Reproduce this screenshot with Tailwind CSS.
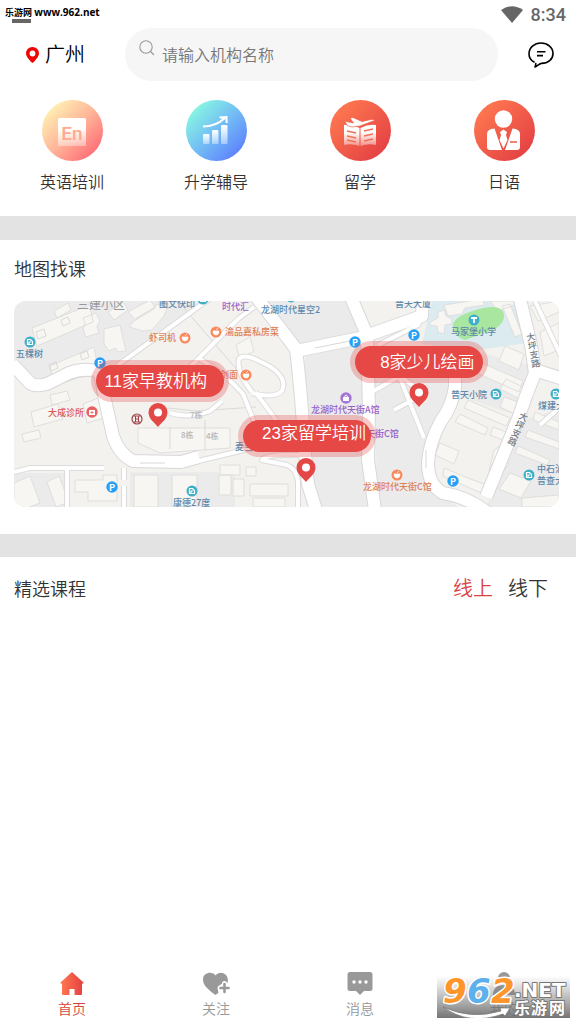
<!DOCTYPE html>
<html lang="zh-CN">
<head>
<meta charset="UTF-8">
<meta name="viewport" content="width=device-width,initial-scale=1">
<title>首页</title>
<script src="https://cdn.jsdelivr.net/npm/@tailwindcss/browser@4"></script>
</head>
<body class="bg-white font-['Noto_Sans_CJK_SC',sans-serif] font-[350] text-[#333]">
<div class="relative flex min-h-screen flex-col">

  <!-- status bar -->
  <div class="flex h-7 items-start justify-between pl-[5px] pr-[10px]">
    <div>
      <p class="mt-[6px] font-['Open_Sans','Noto_Sans_CJK_SC',sans-serif] text-[9px] leading-[13px] font-bold text-black">乐游网 <span class="text-[10px]">www.962.net</span></p>
      <div class="ml-[7px] h-1 w-[19px] bg-[#666]"></div>
    </div>
    <div class="flex items-center gap-2 pt-[5px] text-[#666]">
      <svg class="h-[18px] w-[22px]" viewBox="0 0 22 18" fill="currentColor"><path d="M0 4Q11-3.500 22 4L11 17Z"/></svg>
      <span class="font-[Roboto,sans-serif] text-[18px] leading-5 font-medium">8:34</span>
    </div>
  </div>

  <!-- header -->
  <header class="flex items-center pr-[22px] pl-[26px]">
    <button class="flex w-[99px] items-center gap-[6px] text-[20px] leading-6 text-black">
      <svg class="h-4 w-[13px]" viewBox="0 0 13 16"><path d="M6.500 0A6.400 6.400 0 0 0 0 6.400C0 10.500 6.500 16 6.500 16S13 10.500 13 6.400A6.400 6.400 0 0 0 6.500 0Z" fill="#f00505"/><circle cx="6.500" cy="6.500" r="2.900" fill="#fff"/></svg>
      <span class="pb-[2px]">广州</span>
    </button>
    <label class="flex h-[53px] flex-1 items-center gap-[7px] rounded-full bg-[#f6f6f6] px-[14px]">
      <svg class="mb-[14px] h-4 w-4 shrink-0" viewBox="0 0 16 16" fill="none" stroke="#999" stroke-width="1.100"><circle cx="7" cy="7" r="6.200"/><path d="m11.500 11.500 3.500 3.500"/></svg>
      <input type="text" aria-label="搜索" placeholder="请输入机构名称" class="min-w-0 flex-1 bg-transparent pb-[2px] text-base outline-none placeholder:text-[#777]">
    </label>
    <button class="ml-[30px]" aria-label="消息">
      <svg class="h-[26px] w-[26px]" viewBox="0 0 26 26" fill="none" stroke="#000" stroke-width="1.600" stroke-linecap="round" stroke-linejoin="round"><path d="M6 20C3 18.300 1 15.400 1 11.700 1 5.800 6.200 1 13 1s12 4.600 12 10.400-5 10-11.500 10C11.500 21.500 9.500 24 7 25c.6-1.300.8-2.200.8-3.400"/><path d="M9 9.800h8.500M9 13.600h6" stroke-linecap="butt"/></svg>
    </button>
  </header>

  <!-- categories -->
  <nav class="grid grid-cols-4 pt-[19px] pb-[23px]">
    <a href="#" class="flex flex-col items-center gap-2">
      <svg class="h-[61px] w-[61px]" viewBox="0 0 61 61">
        <defs>
          <linearGradient id="c1" x1=".1" y1=".1" x2=".9" y2=".9"><stop stop-color="#fff4b5"/><stop offset=".5" stop-color="#ffb699"/><stop offset="1" stop-color="#fe6975"/></linearGradient>
          <linearGradient id="fade" x1="0" y1="0" x2="0" y2="1"><stop offset=".35" stop-color="#fff"/><stop offset="1" stop-color="#fff" stop-opacity=".35"/></linearGradient>
        </defs>
        <circle cx="30.500" cy="30.500" r="30.500" fill="url(#c1)"/>
        <rect x="16" y="18" width="28" height="28" rx="1.500" fill="url(#fade)"/>
        <text x="30" y="39.500" text-anchor="middle" font-family="Roboto, sans-serif" font-size="19" font-weight="500" fill="#ffa98f">En</text>
      </svg>
      <span class="text-base leading-6">英语培训</span>
    </a>
    <a href="#" class="flex flex-col items-center gap-2">
      <svg class="h-[61px] w-[61px]" viewBox="0 0 61 61">
        <defs>
          <linearGradient id="c2" x1=".1" y1=".1" x2=".9" y2=".9"><stop stop-color="#89fbe0"/><stop offset=".5" stop-color="#73bdf5"/><stop offset="1" stop-color="#5c7efc"/></linearGradient>
          <linearGradient id="bar" x1="0" y1="0" x2="0" y2="1"><stop stop-color="#fff"/><stop offset="1" stop-color="#fff" stop-opacity=".4"/></linearGradient>
        </defs>
        <circle cx="30.500" cy="30.500" r="30.500" fill="url(#c2)"/>
        <g fill="url(#bar)"><rect x="17" y="34" width="6.500" height="10" rx="1"/><rect x="26" y="30" width="6.500" height="14" rx="1"/><rect x="35" y="25" width="6.500" height="19" rx="1"/></g>
        <path d="M17 26.500c9 0 16-3 22-8.500M33.500 17.500 40.500 17l.2 6" fill="none" stroke="#fff" stroke-width="2"/>
      </svg>
      <span class="text-base leading-6">升学辅导</span>
    </a>
    <a href="#" class="flex flex-col items-center gap-2">
      <svg class="h-[61px] w-[61px]" viewBox="0 0 61 61">
        <defs><linearGradient id="c3" x1=".1" y1=".1" x2=".9" y2=".9"><stop stop-color="#ff7950"/><stop offset="1" stop-color="#e34043"/></linearGradient></defs>
        <circle cx="30.500" cy="30.500" r="30.500" fill="url(#c3)"/>
        <path d="M14 25q8-1 15.500 3v18Q22 43 14 45ZM46 25q-8-1-15.500 3v18Q38 43 46 45Z" fill="url(#fade)"/>
        <path d="m17 31 9 2m-9 3 9 2m-9 2 9 2M43 29l-9 2m9 3-9 2m9 3-9 2" stroke="#f17158" stroke-width="1.500"/>
        <path d="m15 21 3.500 1 5 1L20 18l3-.5 9 4 9-2q3-.5 3.500 1L30 26l-8 1-5-1.500Z" fill="#fff" stroke="#ee6049" stroke-width=".7"/>
      </svg>
      <span class="text-base leading-6">留学</span>
    </a>
    <a href="#" class="flex flex-col items-center gap-2">
      <svg class="h-[61px] w-[61px]" viewBox="0 0 61 61">
        <circle cx="30.500" cy="30.500" r="30.500" fill="url(#c3)"/>
        <circle cx="29.500" cy="19" r="8.700" fill="#fff"/>
        <path d="M20.500 28.500 28 50H16q-3 0-3-3V34q0-5 7.500-5.500ZM38.500 28.500 31 50h12q3 0 3-3V34q0-5-7.500-5.500ZM29.500 29.500 33 32l-1 3 1.500 5-4 8.500-4-8.500 1.500-5-1-3Z" fill="#fff"/>
        <path d="M36 42h7" stroke="#ee7864" stroke-width="1.800"/>
      </svg>
      <span class="text-base leading-6">日语</span>
    </a>
  </nav>

  <div class="h-6 bg-[#e3e3e3]"></div>

  <!-- map -->
  <section class="pr-[17px] pb-[27px] pl-[14px]">
    <h2 class="pt-[15px] pb-[19px] text-[18px] leading-[27px]">地图找课</h2>
    <div class="relative overflow-hidden rounded-xl">
      <svg class="block w-full" viewBox="14 301 545 206">
        <defs>
          <g id="roads" fill="none" stroke-linejoin="round">
            <path d="M12 364 30 383q5 4 17 1l22-11q16-6 31-1l5 28 8 36q6 18 20 25l48 1 18-5"/>
            <path d="M254 294 296 349q6 50 8 95l4 40 8 26M350 295l17 40 2 75-1 50 7 50M296 351l64-13 62-22 1-20"/>
            <path d="M519 295l12 50 4 28-9 23-8 23-32 78"/>
            <path d="M455 365v22q-3 20-14 34-12 22-13 42 0 22 15 30 25 4 45 20"/>
            <path d="m535 370 28 9"/>
          </g>
          <g id="lanes" fill="none" stroke-linejoin="round">
            <path d="M212 297 118 365M10 473l20-5h74M67 469v40M124 468v12m0 6v24"/>
            <path d="m190 463 50-12 30-8M298 509v-28q-3-16-16-17l-20-4q3-6 40-5"/>
            <path d="M190 367l48-48 16-12M198 358q26 14 45 36l20 50M252 392q-16-20-13-33 5-6 20 2 30 13 23 30-8 8-30 2M255 392q24 30 34 50"/>
            <path d="m372 392 28-16 24 18-30 16M400 378l24 60M378 345l40-20 10-24"/>
            <path d="M535 301l26 55M540 425l20-18M170 413q20 6 40-2l12-10"/>
          </g>
          <g id="shop"><circle r="5.500" fill="#fa8a5c"/><path d="M-3-1h6q0 4-3 4t-3-4m3-1 2-2" fill="#fff" stroke="#fff" stroke-width=".7"/></g>
          <g id="site"><circle r="5.500" fill="#3fb0c8"/><path d="M-2.500 2.500v-5h3l2 2v3ZM-1 2.500V0h2" fill="none" stroke="#fff" stroke-width="1.200"/></g>
          <g id="park"><circle r="5.700" fill="#27a0f5"/><text x="-3" y="3.500" font-size="9" font-weight="700" fill="#fff">P</text></g>
          <g id="pin"><path d="M0-12a9.500 9.500 0 0 0-9.500 9.500C-9.500 4-3 8 0 12 3 8 9.500 4 9.500-2.500A9.500 9.500 0 0 0 0-12Z" fill="#e44846"/><circle cy="-2.500" r="4" fill="#fff"/></g>
        </defs>
        <rect x="14" y="301" width="545" height="206" fill="#f3f2ef"/>
        <!-- grey blocks -->
        <path d="M14 301h190l-88 64-48 5-30 14-24-26ZM266 301h82l14 34-62 13ZM305 356l60-12 2 110 6 53h-62l-7-50ZM372 345l80 25-2 30-22 45v40l30 22h-80ZM14 473h50v34H14ZM130 472h105v35H130ZM430 340l100 25-14 50-60-20ZM522 420l37-10v97h-73Z" fill="#ebebec"/>
        <path d="M432 301h88l10 42-54 7-54-6Z" fill="#dcebef"/>
        <!-- buildings -->
        <g fill="#f7f6f2" stroke="#dfdedc" stroke-width="1">
          <path d="m32 328 58-23 3 17-56 24ZM50 366l44-19 3 16-44 18ZM54 311l14-8 3 7-14 8ZM83 318l13-5 4 8-3 5 2 7-13 4-3-8 2-5ZM104 329l16-4 6 26-8 1-3-4-6 3-5-7ZM143 331l-14-4 5-6 20-12 3-5 10 4-3 8-12 14ZM108 312l15-10 5 8-14 10ZM128 312l22-12 5 7-20 12Z"/>
          <path d="m31 412 27-8 5 15-29 8ZM22 434l17-4 2 8-17 4ZM83 404l15-6 6 20-17 5ZM50 395l17-4 3 9-18 5ZM14 483l16-7 10 27-18 7H14ZM47 482l12-6 10 26-13 5ZM75 480h28v-5h14v26h-29v-9H75ZM134 475h24v32h-24ZM172 475h25v32h-25Z"/>
          <path d="M220 465h20v10h-20ZM219 475h12v20h-12ZM233 479h11v17h-11ZM246 467h10v9h-10ZM250 484h38v12h-38ZM253 498h32v9h-32ZM138 428h92v20l-70 5-22-10ZM236 345l14-8 4 14-14 8Z"/>
          <path d="m430 322 8-4v-6l6-2 2 6 6 3-1 5-6 1-1 9-6-2-1-6-7-1ZM444 305l38-6 3 6-20 3-3 6-14 2ZM510 304l12 30-7 3-13-31ZM490 301h24v4l-16 6ZM505 346l19 8-5 16-20-9ZM482 363l41 18-4 11-40-18ZM506 379l19 9-5 11-20-10ZM540 332l19-9v27l-15 6ZM530 306l29-5v11l-21 9Z"/>
          <path d="m460 414 28 14-3 7-30-13ZM468 400l42 18-4 8-42-18ZM504 397l20 7-5 12-19-9ZM440 443l19 8-5 13-19-9ZM444 468l24 10 24 9-4 9-45-20ZM494 450l8-5 4 6-4 8 7 5-8 10-12-3ZM510 473l21 8-10 17-22-9ZM522 498l37-3v12h-37ZM493 427l16 6-4 8-15-6ZM535 412l24 10v8l-26-10ZM528 430l31 12v7l-34-12ZM518 446l32 14-3 5-32-12Z"/>
        </g>
        <path d="M453 325q1-10 30-17 20-4 21 7 0 12-17 17l-22 8q-12-4-12-15Z" fill="#a9e6a0"/>
        <g fill="none" stroke="#dad9d7" stroke-width="1"><path d="m36 332 8-3 2 7-8 3ZM61 320l7-3 2 6-7 3ZM49 365l7-3 2 6-7 3ZM80 354l7-3 2 6-7 3ZM178 301l60 70M158 407l38 4 60-4M170 427v22M205 420v30"/></g>
        <use href="#lanes" stroke="#dcdcdd" stroke-width="6"/>
        <use href="#roads" stroke="#d8d8da" stroke-width="14"/>
        <use href="#lanes" stroke="#fff" stroke-width="4"/>
        <use href="#roads" stroke="#fff" stroke-width="12"/>
        <path d="M65 382l15-5 14-1M140 463h25M426 450v18M315 348l40-8" fill="none" stroke="#d8d8d9"/>
        <!-- place names -->
        <g font-size="9" font-weight="500" fill="#5d88ab">
          <text x="77" y="309" font-size="12" font-weight="400" fill="#96989c">三建小区</text>
          <text x="159" y="307">图文快印</text>
          <text x="16" y="357">五棵树</text>
          <text x="222" y="310" fill="#9761c8">时代汇</text>
          <text x="261" y="313">龙湖时代星空2</text>
          <text x="395" y="307">晋天大厦</text>
          <text x="451" y="335">马家堡小学</text>
          <text x="451" y="398">普天小院</text>
          <text x="538" y="409">煤建大</text>
          <text x="537" y="472">中石油</text>
          <text x="537" y="484">普查大</text>
          <text x="173" y="506">康德27度</text>
          <text x="235" y="450">麦当</text>
          <text x="149" y="341" fill="#df8055">虾司机</text>
          <text x="225" y="335" fill="#df8055">渝品嘉私房菜</text>
          <text x="220" y="378" fill="#df8055">剑面</text>
          <text x="48" y="416" fill="#df5653">大成诊所</text>
          <text x="311" y="413" fill="#9761c8">龙湖时代天街A馆</text>
          <text x="366" y="437" fill="#9761c8">天街C馆</text>
          <text x="363" y="490" fill="#df8055">龙湖时代天街C馆</text>
          <g font-size="8" fill="#b6b6b8"><text x="181" y="438">8栋</text><text x="206" y="439">4栋</text><text x="190" y="418">7栋</text></g>
          <g fill="#77797d"><text transform="translate(527 341) rotate(-10)"><tspan x="0" y="0">大</tspan><tspan x="0" y="9">坪</tspan><tspan x="0" y="18">支</tspan><tspan x="0" y="27">路</tspan></text>
          <text transform="translate(518 418) rotate(24)"><tspan x="0" y="0">大</tspan><tspan x="0" y="9">坪</tspan><tspan x="0" y="18">支</tspan><tspan x="0" y="27">路</tspan></text></g>
        </g>
        <use href="#shop" x="185" y="338"/><use href="#shop" x="216" y="332"/><use href="#shop" x="246" y="375"/><use href="#shop" x="397" y="475"/>
        <use href="#site" x="30" y="342"/><use href="#site" x="203" y="299"/><use href="#site" x="291" y="297"/><use href="#site" x="192" y="491"/><use href="#site" x="496" y="394"/><use href="#site" x="556" y="394"/><use href="#site" x="529" y="475"/>
        <use href="#park" x="100" y="363"/><use href="#park" x="355" y="342"/><use href="#park" x="414" y="335"/><use href="#park" x="112" y="487"/><use href="#park" x="453" y="481"/>
        <g><circle cx="474" cy="320" r="5.500" fill="#3fb0c8"/><path d="M471 318h6M474 318v5" stroke="#fff" stroke-width="1.800"/></g>
        <g><circle cx="346" cy="398" r="5.700" fill="#a474d8"/><path d="M343 397h6v4h-6Z" fill="#fff"/><path d="M344.500 397q1.500-4 3 0" fill="none" stroke="#fff"/></g>
        <g><circle cx="92" cy="412" r="5.700" fill="#ea6063"/><path d="M89 410h6v5h-6Z" fill="#fff"/><path d="M92 411v3m-1.500-1.500h3" stroke="#ea6063" stroke-width=".8"/></g>
        <g fill="none" stroke="#a0444a"><circle cx="137" cy="419" r="5" stroke-width="1.200"/><path d="M134 416h6M134 422h6M135.500 416v6M138.500 416v6M135 419h4"/></g>
        <use href="#pin" x="158" y="415"/><use href="#pin" x="419" y="395"/><use href="#pin" x="306" y="470"/>
      </svg>
      <button class="absolute top-[31%] left-[15%] h-8 w-32 rounded-full bg-[#e54845] pr-2 font-['Liberation_Sans','Noto_Sans_CJK_SC',sans-serif] text-[17px] leading-[34px] whitespace-nowrap text-white ring-5 ring-[#e54845]/30">11家早教机构</button>
      <button class="absolute top-[22%] left-[62.500%] h-8 w-32 rounded-full bg-[#e54845] pr-2 text-right font-['Liberation_Sans','Noto_Sans_CJK_SC',sans-serif] text-[17px] leading-[34px] whitespace-nowrap text-white ring-5 ring-[#e54845]/30">8家少儿绘画</button>
      <button class="absolute top-[58%] left-[42%] h-8 w-32 rounded-full bg-[#e54845] pr-[5px] pb-1 text-right font-['Liberation_Sans','Noto_Sans_CJK_SC',sans-serif] text-[17px] leading-6 whitespace-nowrap text-white ring-5 ring-[#e54845]/30">23家留学培训</button>
    </div>
  </section>

  <div class="h-[23px] bg-[#e3e3e3]"></div>

  <!-- courses -->
  <section class="flex items-center justify-between pt-4 pr-7 pl-[14px]">
    <h2 class="text-[18px] leading-[30px]">精选课程</h2>
    <div class="flex gap-[15px] text-[20px] leading-[30px]">
      <button class="text-[#d9433f]">线上</button>
      <button>线下</button>
    </div>
  </section>

  <!-- tab bar -->
  <nav class="mt-auto grid grid-cols-4 pb-[5px] text-[14px] leading-[22px] text-[#999]">
    <a href="#" class="flex flex-col items-center gap-px text-[#d9433f]">
      <svg class="h-[26px] w-[26px]" viewBox="0 0 26 26"><defs><linearGradient id="home"><stop stop-color="#ff7950"/><stop offset="1" stop-color="#e34043"/></linearGradient></defs><path d="M13 2 1.500 12.500q-.5 1.500 1.500 1V24q0 1 1 1h6.500v-6h5v6H22q1 0 1-1V13.500q2 .5 1.500-1Z" fill="url(#home)"/></svg>
      <span>首页</span>
    </a>
    <a href="#" class="flex flex-col items-center gap-px">
      <svg class="h-[26px] w-[28px]" viewBox="0 0 28 26"><path d="M13.500 5.500C11 1 1 1.500 1 9.500 1 16 7 20 13.500 25c1.500-1 2-1.500 3-2.500-2-5 1-10 9-9.500C28 4 18-.5 13.500 5.500Z" fill="#999"/><path d="M22.500 13.500v9M18 18h9" stroke="#fff" stroke-width="5" stroke-linecap="round"/><path d="M22.500 14v8M18.500 18h8" stroke="#999" stroke-width="2.600" stroke-linecap="round"/></svg>
      <span>关注</span>
    </a>
    <a href="#" class="flex flex-col items-center gap-px">
      <svg class="h-[26px] w-[26px]" viewBox="0 0 26 26"><path d="M3 2h20q2.500 0 2.500 2.500v14Q25.500 21 23 21h-6l-4 4-4-4H3Q.5 21 .5 18.500v-14Q.5 2 3 2Z" fill="#999"/><g fill="#fff"><circle cx="7" cy="12" r="1.700"/><circle cx="13" cy="12" r="1.700"/><circle cx="19" cy="12" r="1.700"/></g></svg>
      <span>消息</span>
    </a>
    <a href="#" class="flex flex-col items-center gap-px">
      <svg class="h-[26px] w-[26px]" viewBox="0 0 26 26" fill="#999"><circle cx="13" cy="8" r="6"/><path d="M2 25q0-10 11-10t11 10Z"/></svg>
      <span>我的</span>
    </a>
  </nav>

  <!-- site badge -->
  <svg class="absolute right-[6px] bottom-[6px] h-[42px] w-[133px]" viewBox="0 0 133 42">
    <defs><linearGradient id="shade" x1="0" y1="0" x2="0" y2="1"><stop stop-color="#777" stop-opacity="0"/><stop offset="1" stop-color="#666" stop-opacity=".9"/></linearGradient></defs>
    <rect width="133" height="42" fill="url(#shade)"/>
    <path d="M6 31Q34 44 64 35l-1-3 10 0-5 8-2-2Q32 50 6 31Z" fill="#fff" stroke="#777" stroke-width=".7"/>
    <g font-family="DejaVu Sans, sans-serif" font-weight="700" font-style="italic" font-size="34" stroke="#fff" stroke-width="3" stroke-linejoin="round" paint-order="stroke">
      <text x="6" y="27" fill="#ff962c">9</text><text x="30" y="27" fill="#5cb0ec">6</text><text x="54" y="27" fill="#ff962c">2</text>
    </g>
    <g fill="#fff" stroke="#777" stroke-width="2" stroke-linejoin="round" paint-order="stroke" font-weight="700">
      <text x="77" y="21" font-family="DejaVu Sans, sans-serif" font-size="20">.NET</text>
      <g font-size="16"><text x="77" y="38">乐</text><text x="94" y="38">游</text><text x="112" y="38">网</text></g>
    </g>
  </svg>
</div>
</body>
</html>
